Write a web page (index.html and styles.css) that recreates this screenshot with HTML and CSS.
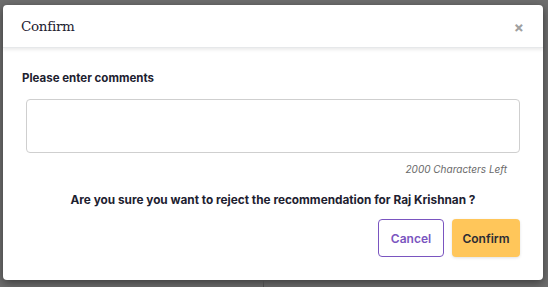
FILE: index.html
```html
<!DOCTYPE html>
<html>

<head>
  <title>Confirm</title>
  <link rel="stylesheet" href="styles.css">
</head>

<body>
  <div class="backdrop">
    <div class="modal">
      <div class="modal-header">
        <h3 class="modal-title">Confirm</h3>
        <span class="close">&times;</span>
      </div>
      <div class="modal-body">
        <label for="comments" class="field-label">Please enter comments</label>
        <textarea id="comments" class="comments"></textarea>
        <p class="char-count">2000 Characters Left</p>
        <p class="question">Are you sure you want to reject the recommendation for Raj Krishnan ?</p>
        <div class="actions">
          <button type="button" class="btn btn-cancel">Cancel</button>
          <button type="button" class="btn btn-confirm">Confirm</button>
        </div>
      </div>
    </div>
    <div class="page-behind"></div>
  </div>
</body>

</html>
```

FILE: styles.css
```css
body {
  margin: 0;
  padding: 0;
  font-family: Inter, "Noto Sans", sans-serif;
  background-color: #6e6e6e;
  height: 287px;
  overflow: hidden;
}

.backdrop {
  padding: 5px 5px 0 3px;
}

.modal {
  width: 540px;
  height: 275px;
  background-color: #fff;
  border-radius: 4px;
  box-shadow: 0 3px 10px rgba(0, 0, 0, 0.45);
  display: flex;
  flex-direction: column;
}

.modal-header {
  height: 42px;
  display: flex;
  align-items: center;
  justify-content: space-between;
  padding: 0 19px 0 18px;
  box-shadow: 0 2px 3px rgba(0, 0, 0, 0.08);
  border-bottom: 1px solid #e6e8ea;
}

.modal-title {
  margin: 0;
  font-family: "DejaVu Serif", serif;
  font-size: 13.5px;
  font-weight: normal;
  color: #1d2130;
  letter-spacing: -0.3px;
}

.close {
  color: #a0a0a0;
  font-size: 15px;
  font-weight: bold;
  line-height: 1;
  padding-top: 2px;
}

.modal-body {
  padding: 23px 23px 0 19px;
  display: flex;
  flex-direction: column;
}

.field-label {
  font-size: 11.5px;
  font-weight: 700;
  color: #1d2130;
  margin-bottom: 14px;
}

.comments {
  margin-left: 4px;
  height: 54px;
  border: 1px solid #cfcfcf;
  border-radius: 4px;
  resize: none;
  padding: 6px;
  box-sizing: border-box;
}

.char-count {
  margin: 10px 13px 0 0;
  text-align: right;
  font-size: 10px;
  font-style: italic;
  color: #6a6a6a;
}

.question {
  margin: 18px 0 0 4px;
  text-align: center;
  font-size: 11.8px;
  font-weight: 700;
  color: #1d2130;
}

.actions {
  display: flex;
  justify-content: flex-end;
  gap: 8px;
  margin-top: 12px;
}

.btn {
  height: 38px;
  border-radius: 4px;
  font-family: Inter, "Noto Sans", sans-serif;
  font-size: 12px;
  font-weight: 600;
  cursor: pointer;
}

.btn-cancel {
  width: 66px;
  background-color: #fff;
  border: 1px solid #7a55c0;
  color: #7a55c0;
}

.btn-confirm {
  width: 68px;
  background-color: #ffc65a;
  border: none;
  color: #2c2c34;
  box-shadow: 0 1px 3px rgba(0, 0, 0, 0.12);
}

.page-behind {
  width: 260px;
  height: 7px;
  border-right: 1px solid #4a4a4a;
}
```
